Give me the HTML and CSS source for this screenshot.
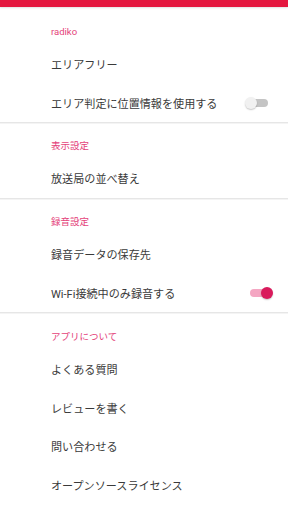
FILE: index.html
```html
<!DOCTYPE html>
<html lang="ja">
<head>
    <meta charset="UTF-8">
    <meta name="viewport" content="width=device-width, initial-scale=1.0">
    <title>設定</title>
    <link rel="stylesheet" href="styles.css">
</head>
<body>
    <div class="topbar"></div>

    <div class="settings">
        <div class="section">
            <div class="section-title">radiko</div>
            <div class="item">エリアフリー</div>
            <div class="item">
                <span>エリア判定に位置情報を使用する</span>
                <span class="switch"><span class="track"></span><span class="thumb"></span></span>
            </div>
        </div>

        <div class="section">
            <div class="section-title">表示設定</div>
            <div class="item">放送局の並べ替え</div>
        </div>

        <div class="section">
            <div class="section-title">録音設定</div>
            <div class="item">録音データの保存先</div>
            <div class="item">
                <span>Wi-Fi接続中のみ録音する</span>
                <span class="switch on"><span class="track"></span><span class="thumb"></span></span>
            </div>
        </div>

        <div class="section">
            <div class="section-title">アプリについて</div>
            <div class="item">よくある質問</div>
            <div class="item">レビューを書く</div>
            <div class="item">問い合わせる</div>
            <div class="item">オープンソースライセンス</div>
        </div>
    </div>
</body>
</html>
```

FILE: styles.css
```css
body {
    margin: 0;
    background-color: #ffffff;
    font-family: Roboto, "Noto Sans CJK JP", sans-serif;
    color: #3a3a3a;
}
.topbar {
    height: 7px;
    background-color: #e4173f;
    box-shadow: 0 1px 2px rgba(0, 0, 0, 0.12);
}
.settings {
    padding-top: 2px;
}
.section {
    border-bottom: 1px solid #e6e6e6;
    box-shadow: 0 1px 0 #f4f4f4;
}
.section:last-child {
    border-bottom: none;
    box-shadow: none;
    padding-top: 1px;
}
.section-title {
    padding: 15px 0 5px 51px;
    line-height: 16px;
    font-size: 9.5px;
    color: #e4427a;
}
.item {
    display: flex;
    align-items: center;
    justify-content: space-between;
    height: 38.6px;
    padding-left: 51px;
    padding-right: 15px;
    font-size: 11.1px;
    color: #3a3a3a;
}

/* small material style switch */
.switch {
    position: relative;
    display: inline-block;
    width: 28px;
    height: 12px;
}
.switch .track {
    position: absolute;
    left: 5px;
    top: 2px;
    width: 18px;
    height: 8px;
    border-radius: 4px;
    background-color: #c4c4c4;
}
.switch .thumb {
    position: absolute;
    left: 0;
    top: 0;
    width: 12px;
    height: 12px;
    border-radius: 50%;
    background-color: #f1f1f1;
    box-shadow: 0 1px 1.5px rgba(0, 0, 0, 0.22);
}
.switch.on .track {
    background-color: #f4a6c2;
}
.switch.on .thumb {
    left: 16px;
    background-color: #d91a5c;
}
```
